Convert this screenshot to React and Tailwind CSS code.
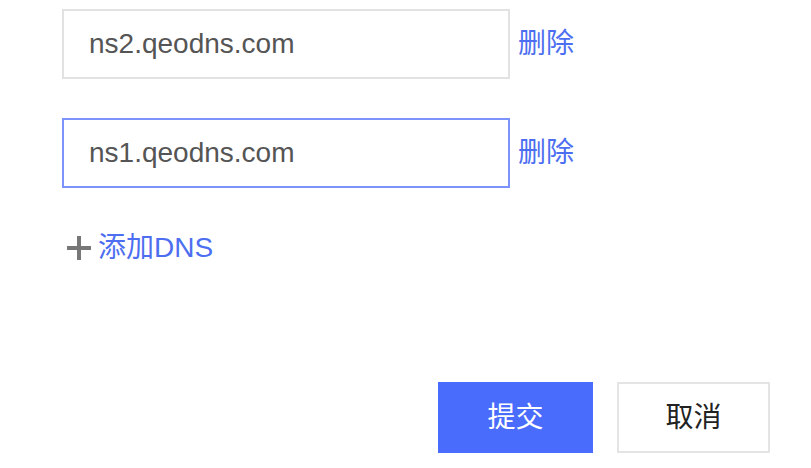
export default function App() {
  const font = { fontFamily: '"Liberation Sans", "Noto Sans CJK SC", Arial, sans-serif' };
  return (
    <div className="w-[811px] h-[468px] bg-white overflow-hidden" style={font}>
      <div className="pl-[62px] pt-[9px] flex flex-col">
        <div className="flex items-center">
          <div className="w-[448px] h-[70px] border-2 border-[#e2e2e2] flex items-center pl-[25px] text-[28px] text-[#555555]">
            ns2.qeodns.com
          </div>
          <span className="ml-[8px] text-[28px] text-[#4d6ef0]">删除</span>
        </div>
        <div className="flex items-center mt-[39px]">
          <div className="w-[448px] h-[70px] border-2 border-[#7b93fb] flex items-center pl-[25px] text-[28px] text-[#555555]">
            ns1.qeodns.com
          </div>
          <span className="ml-[8px] text-[28px] text-[#4d6ef0]">删除</span>
        </div>
        <div className="flex items-center mt-[45px] ml-[5px] h-[30px]">
          <svg width="24" height="24" viewBox="0 0 24 24" className="mr-[7px]">
            <rect x="0" y="10" width="24" height="4" fill="#777777" />
            <rect x="10" y="0" width="4" height="24" fill="#777777" />
          </svg>
          <span className="text-[28px] text-[#4d6ef0]">添加DNS</span>
        </div>
      </div>
      <div className="flex justify-end gap-[24px] pr-[41px] mt-[119px]">
        <button className="w-[155px] h-[71px] bg-[#4a6cfd] text-white text-[28px]">提交</button>
        <button className="w-[153px] h-[71px] border-2 border-[#e4e4e4] bg-white text-[#222222] text-[28px]">取消</button>
      </div>
    </div>
  );
}
